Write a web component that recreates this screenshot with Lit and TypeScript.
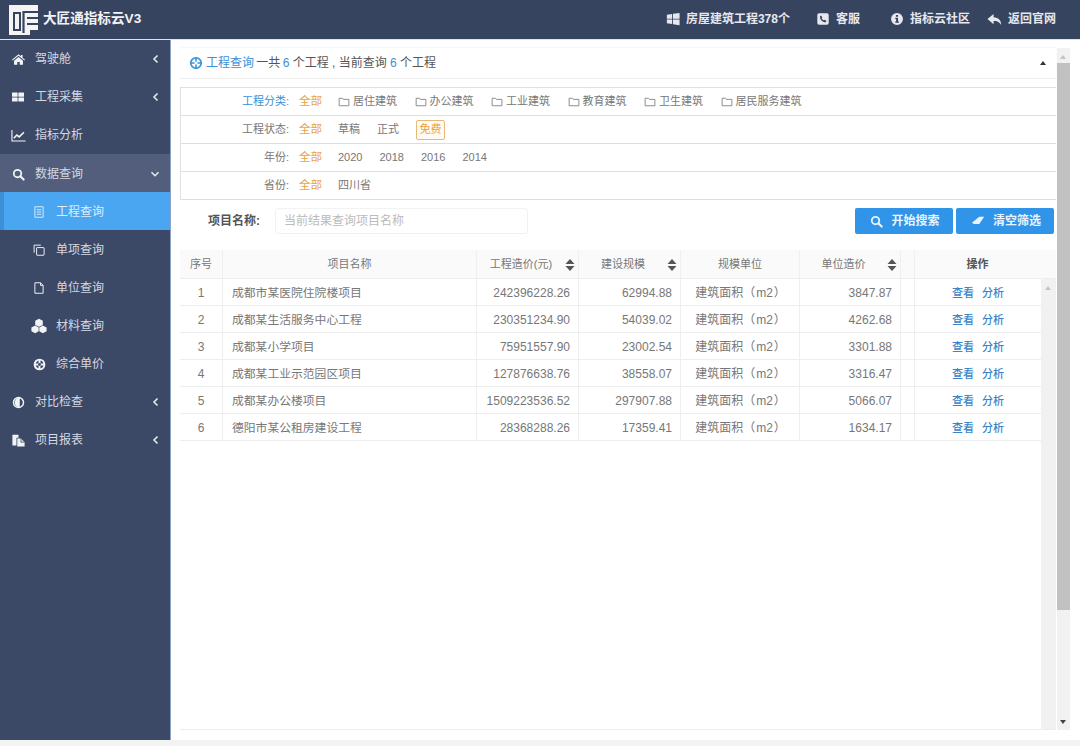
import { LitElement, html, css, svg } from "lit";
import { customElement } from "lit/decorators.js";

const I: Record<string, any> = {
  home: svg`<path d="M8 1.500 0 8.300l.8 1L8 3.300l7.200 6 .8-1-3-2.500V2.500h-2v1.600z"/><path d="M2.500 9.600 8 5l5.500 4.600V14.500H9.500v-3.500h-3v3.500h-4z"/>`,
  th: svg`<rect x="0" y="2" width="7.500" height="5.500" rx=".5"/><rect x="8.500" y="2" width="7.500" height="5.500" rx=".5"/><rect x="0" y="8.500" width="7.500" height="5.500" rx=".5"/><rect x="8.500" y="8.500" width="7.500" height="5.500" rx=".5"/>`,
  chart: svg`<path d="M1 2v11.800h14.500" fill="none" stroke="currentColor" stroke-width="1.200"/><path d="M3 11 6.200 7.500l2.600 2L13.800 4.500" fill="none" stroke="currentColor" stroke-width="1.700"/>`,
  search: svg`<circle cx="6.800" cy="6.800" r="4.600" fill="none" stroke="currentColor" stroke-width="2.200"/><path d="m10.300 10.300 4 4" stroke="currentColor" stroke-width="2.600" stroke-linecap="round"/>`,
  list: svg`<path d="M2.500 1h11v14h-11z M5 5h6 M5 8h6 M5 11h6" fill="none" stroke="currentColor" stroke-width="1.300"/>`,
  copy: svg`<path d="M1.500 11.500V1.500h9" fill="none" stroke="currentColor" stroke-width="1.300"/><rect x="4.800" y="4.800" width="10" height="10.200" rx=".6" fill="none" stroke="currentColor" stroke-width="1.300"/>`,
  file: svg`<path d="M2.500 1h7.500l3.500 3.500V15h-11zM10 1v3.500h3.500" fill="none" stroke="currentColor" stroke-width="1.300"/>`,
  cubes: svg`<path d="M8 .8 11.800 2.700v4.200L8 8.800 4.200 6.900V2.700z"/><path d="M4.200 7.600 7.700 9.400v3.900L4.200 15.200.4 13.300V9.400z"/><path d="M11.800 7.600l3.800 1.800v3.900l-3.800 1.900-3.500-1.900V9.400z"/>`,
  ring: svg`<circle cx="8" cy="8" r="6" fill="none" stroke="currentColor" stroke-width="2.400"/><path d="M8 2v12M2 8h12" stroke="currentColor" stroke-width="2.400"/><circle cx="8" cy="8" r="1.700" fill="#3b4866"/>`,
  adjust: svg`<circle cx="8" cy="8" r="6.200" fill="none" stroke="currentColor" stroke-width="1.800"/><path d="M9.500 1.800A6.200 6.200 0 0 0 9.500 14.200z"/>`,
  files: svg`<path d="M.5 1h7.500v3.500H5.500V14H.5z"/><path d="M6.500 5.500h4.500L15.500 10v5.500h-9z"/><path d="M11 5.500V10h4.500" fill="none" stroke="#3b4866" stroke-width="1"/>`,
  win: svg`<path d="M1 3.200 7 2.300V7.600H1zM8 2.100l7.500-1.100v6.600H8zM1 8.500h6v5.200l-6-.9zM8 8.500h7.500V15L8 13.900z"/>`,
  phone: svg`<path fill-rule="evenodd" d="M3.500 1.500h9a2 2 0 0 1 2 2v9a2 2 0 0 1-2 2h-9a2 2 0 0 1-2-2v-9a2 2 0 0 1 2-2zM5.700 4 4.500 5c0 3.500 2.800 6.500 6.500 6.600l1-1.300-2-1.500-1 .7C8 9 7 8 6.500 7l.7-1z"/>`,
  info: svg`<path fill-rule="evenodd" d="M8 1.200a6.800 6.800 0 1 0 0 13.600A6.800 6.800 0 0 0 8 1.200zM6.800 3.400h2.400v2H6.800zM6 6.500h3.200v4.400h1v1.500H6v-1.500h1V8H6z"/>`,
  reply: svg`<path d="M7 2 .5 7.500 7 13V9.500c3.500 0 6 .6 8 4.300C15.300 8.500 12 5.800 7 5.500z"/>`,
  eraser: svg`<path d="M9.500 3H15l-5.500 8.500H3.500L1 10z"/>`,
  globe: svg`<circle cx="8" cy="8" r="6" fill="none" stroke="currentColor" stroke-width="2"/><path d="M8 2v12M2 8h12" stroke="currentColor" stroke-width="1.800"/><circle cx="8" cy="8" r="1.800" fill="#fff"/>`,
  folder: svg`<path d="M1.500 3h4.500l1.200 1.500h7.300v8.500H1.500z" fill="none" stroke="currentColor" stroke-width="1.100"/>`,
};
const icon = (n: string, s = 14) =>
  html`<svg class="ic" width=${s} height=${s} viewBox="0 0 16 16" fill="currentColor">${I[n]}</svg>`;

const chevL = html`<svg class="chev" width="8" height="10" viewBox="0 0 8 10"><path d="M5.500 1.500 2 5l3.500 3.500" fill="none" stroke="currentColor" stroke-width="1.600"/></svg>`;
const chevD = html`<svg class="chev" width="10" height="8" viewBox="0 0 10 8"><path d="M1.500 2.200 5 5.700l3.500-3.500" fill="none" stroke="currentColor" stroke-width="1.600"/></svg>`;
const sort = html`<svg class="sort" width="10" height="14" viewBox="0 0 10 14"><path d="M5 1 9.500 6H.5zM5 13 .5 8h9z" fill="#555"/></svg>`;

const nav = [
  { i: "home", s: 13, t: "驾驶舱", c: "l" },
  { i: "th", s: 12, t: "工程采集", c: "l" },
  { i: "chart", s: 15, t: "指标分析" },
  { i: "search", s: 13, t: "数据查询", c: "d", open: true, low: true },
  { i: "list", s: 12, t: "工程查询", sub: true, active: true, low: true },
  { i: "copy", s: 12, t: "单项查询", sub: true, low: true },
  { i: "file", s: 12, t: "单位查询", sub: true, low: true },
  { i: "cubes", s: 16, t: "材料查询", sub: true, low: true },
  { i: "ring", s: 13, t: "综合单价", sub: true, low: true },
  { i: "adjust", s: 13, t: "对比检查", c: "l", low: true },
  { i: "files", s: 13, t: "项目报表", c: "l", low: true },
];

const rows = [
  ["1", "成都市某医院住院楼项目", "242396228.26", "62994.88", "3847.87"],
  ["2", "成都某生活服务中心工程", "230351234.90", "54039.02", "4262.68"],
  ["3", "成都某小学项目", "75951557.90", "23002.54", "3301.88"],
  ["4", "成都某工业示范园区项目", "127876638.76", "38558.07", "3316.47"],
  ["5", "成都某办公楼项目", "1509223536.52", "297907.88", "5066.07"],
  ["6", "德阳市某公租房建设工程", "28368288.26", "17359.41", "1634.17"],
];

const cats = ["居住建筑", "办公建筑", "工业建筑", "教育建筑", "卫生建筑", "居民服务建筑"];

@customElement("app-root")
export class AppRoot extends LitElement {
  static styles = css`
    :host {
      display: block;
      width: 1080px;
      height: 746px;
      overflow: hidden;
      background: #fff;
      font: 12px/1.2 "Liberation Sans", "Noto Sans CJK SC", sans-serif;
      color: #666;
    }
    .ic { flex: none; display: block; }
    .top {
      box-sizing: border-box;
      background: #37445f;
      border-bottom: 1px solid #dfe3ea;
      height: 40px;
      display: flex;
      align-items: center;
      color: #fff;
    }
    .logo { margin-left: 9px; flex: none; display: block; }
    .brand { margin-left: 5px; font-size: 13.6px; font-weight: 700; color: #f2f3f6; }
    .tops { margin-left: auto; display: flex; align-items: center; padding-right: 24px; }
    .tl { display: flex; align-items: center; gap: 6px; font-weight: 700; color: #e6e8ee; }
    .m27 { margin-right: 26px; }
    .m30 { margin-right: 30px; }
    .m18 { margin-right: 17px; }
    .body { display: flex; height: 700px; }
    .strip { height: 6px; background: #f3f3f3; }
    .side { flex: none; background: #3b4866; color: #d5d9e2; border-right: 1px solid #8fa3c4; box-sizing: border-box; width: 171px; }
    .ni { height: 38px; box-sizing: border-box; display: flex; align-items: center; padding-left: 10px; padding-right: 10px; }
    .ni.low { padding-top: 2px; }
    .iw { width: 16px; margin-right: 9px; display: flex; justify-content: center; color: #f2f3f6; flex: none; }
    .ni .chev { margin-left: auto; color: #e6e8ee; }
    .ni.open { background: #525e7b; }
    .ni.sub { padding-left: 31px; }
    .ni.active { background: #4ba6f2; color: #dcecfb; box-shadow: inset 4px 0 0 #3d8fd6; }
    .ni.active .iw { color: #d7ecfc; }
    .main { flex: 1; min-width: 0; padding: 8px 10px 0 9px; display: flex; gap: 1px; background: #fff; }
    .col { width: 876px; flex: none; height: 682px; display: flex; flex-direction: column; }
    .title {
      height: 31px;
      box-sizing: border-box;
      border-bottom: 1px solid #eee;
      display: flex;
      align-items: center;
      padding: 0 10px 0 9px;
      color: #555;
      white-space: pre;
      box-shadow: 0 -1px 2px #f4f4f4;
    }
    .title .ic { color: #3a96dd; margin-right: 3px; }
    .blue { color: #3a8fd6; }
    .tight { margin-left: -1px; }
    .tri { margin-left: auto; width: 0; height: 0; border: 3.5px solid transparent; border-bottom: 4px solid #333; border-top: 0; }
    .filter { margin-top: 8px; border: 1px solid #e0e0e0; border-width: 1px 0 0 1px; }
    .fr { height: 28px; box-sizing: border-box; border-bottom: 1px solid #ddd; display: flex; align-items: center; padding-top: 1px; font-size: 11px; }
    .fr label { width: 108px; text-align: right; color: #777; flex: none; }
    .fr label.blue { color: #3a8fd6; }
    .all { color: #e8a33d; margin-left: 10px; width: 39px; flex: none; font-size: 11.5px; }
    .fi { color: #777; margin-right: 17px; display: flex; align-items: center; gap: 3px; white-space: nowrap; }
    .cat { margin-right: 17.5px; }
    .fi .ic { color: #777; }
    .badge { border: 1px solid #e8b878; border-radius: 2px; color: #e8a33d; background: #fffaf2; width: 29px; height: 20px; box-sizing: border-box; display: flex; align-items: center; justify-content: center; margin-top: -1px; }
    .sr { height: 45px; display: flex; align-items: center; padding-left: 28px; padding-bottom: 4px; box-sizing: border-box; }
    .sr b { color: #555; width: 67px; flex: none; padding-top: 1px; }
    .inp { width: 253px; height: 26px; box-sizing: border-box; border: 1px solid #f2f2f2; border-radius: 3px; color: #bbb; padding-left: 8px; line-height: 25px; }
    .btns { margin-left: auto; display: flex; gap: 3px; padding-right: 2px; }
    .btn { width: 98px; height: 26px; box-sizing: border-box; padding: 1px 0 0 2px; background: #3095e8; color: #eaf4fd; border-radius: 2px; display: flex; align-items: center; justify-content: center; gap: 8px; font-weight: 700; }
    .tw { margin-top: 5px; flex: 1; display: flex; flex-direction: column; min-height: 0; border-bottom: 1px solid #eee; }
    .rowg { display: grid; grid-template-columns: 43px 254px 102px 102px 119px 101px 14px 126px; }
    .hd { height: 29px; background: #fafafa; box-sizing: border-box; border-bottom: 1px solid #eee; grid-template-columns: 43px 254px 102px 102px 119px 101px 14px 141px; font-size: 11px; }
    .hd > div { display: flex; align-items: center; justify-content: center; color: #777; border-right: 1px solid #f0f0f0; padding-top: 1px; }
    .hd .lab { flex: 1; text-align: center; }
    .hd .sort { margin-right: 3px; flex: none; }
    .hd > div:last-child { border-right: 0; color: #555; font-weight: 700; padding-right: 16px; }
    .tb { flex: 1; display: flex; min-height: 0; }
    .rows { width: 861px; flex: none; }
    .r { height: 27px; box-sizing: border-box; border-bottom: 1px solid #eee; }
    .r > div { display: flex; align-items: center; border-right: 1px solid #eee; padding: 3px 9px 0; color: #777; white-space: nowrap; }
    .r > .n { font-size: 11.8px; }
    .r > .c { justify-content: center; }
    .r > .u { padding-left: 10px; }
    .r > .e { justify-content: flex-end; padding-right: 8px; padding-left: 0; }
    .r > .x { padding: 0; }
    .r > .o { border-right: 0; justify-content: center; gap: 8px; color: #3a85c8; padding: 4px 0 0; font-size: 11px; font-weight: 500; }
    .m2 { padding: 0 1px; }
    .bar { width: 15px; background: #f1f1f1; position: relative; flex: none; }
    .arrow { position: absolute; left: 4px; width: 0; height: 0; border: 3.5px solid transparent; }
    .up { border-bottom: 4px solid #c4c4c4; border-top: 0; top: 7px; }
    .down { border-top: 4px solid #444; border-bottom: 0; bottom: 6px; }
    .osb { width: 13px; flex: none; height: 682px; background: #f1f1f1; position: relative; }
    .thumb { position: absolute; left: 0; right: 0; top: 15px; height: 547px; background: #c1c1c1; }
    .ol { left: 3px; }
  `;

  render() {
    return html`
      <div class="top">
        <svg class="logo" width="29" height="30" viewBox="0 0 29 30">
          <path d="M0 0h29v25h-8v5H0z" fill="#f4f4f4"/>
          <path d="M5 8h6v17H5z" fill="none" stroke="#37445f" stroke-width="2"/>
          <path d="M14.500 6v22" stroke="#37445f" stroke-width="2.200"/>
          <path d="M14.500 7H29M18 13h11M18 19h11" fill="none" stroke="#37445f" stroke-width="2"/>
        </svg>
        <span class="brand">大匠通指标云V3</span>
        <div class="tops">
          <div class="tl m27">${icon("win", 14)}<span>房屋建筑工程378个</span></div>
          <div class="tl m30">${icon("phone", 14)}<span>客服</span></div>
          <div class="tl m18">${icon("info", 14)}<span>指标云社区</span></div>
          <div class="tl">${icon("reply", 15)}<span>返回官网</span></div>
        </div>
      </div>
      <div class="body">
        <nav class="side">
          ${nav.map(
            (n) => html`<div class="ni ${n.open ? "open" : ""} ${n.sub ? "sub" : ""} ${n.active ? "active" : ""} ${n.low ? "low" : ""}">
              <span class="iw">${icon(n.i, n.s)}</span><span>${n.t}</span>${n.c === "l" ? chevL : n.c === "d" ? chevD : ""}
            </div>`
          )}
        </nav>
        <div class="main">
          <div class="col">
            <div class="title">
              ${icon("globe", 14)}<span class="blue">工程查询</span><span class="tight"> 一共 </span><span class="blue tight">6</span><span> 个工程 , 当前查询 </span><span class="blue">6</span><span> 个工程</span>
              <span class="tri"></span>
            </div>
            <div class="filter">
              <div class="fr">
                <label class="blue">工程分类:</label><span class="all">全部</span>
                ${cats.map((c) => html`<span class="fi cat">${icon("folder", 12)}<span>${c}</span></span>`)}
              </div>
              <div class="fr">
                <label>工程状态:</label><span class="all">全部</span>
                <span class="fi">草稿</span><span class="fi">正式</span><span class="badge">免费</span>
              </div>
              <div class="fr">
                <label>年份:</label><span class="all">全部</span>
                ${["2020", "2018", "2016", "2014"].map((y) => html`<span class="fi">${y}</span>`)}
              </div>
              <div class="fr">
                <label>省份:</label><span class="all">全部</span><span class="fi">四川省</span>
              </div>
            </div>
            <div class="sr">
              <b>项目名称:</b>
              <div class="inp">当前结果查询项目名称</div>
              <div class="btns">
                <div class="btn">${icon("search", 13)}<span>开始搜索</span></div>
                <div class="btn">${icon("eraser", 14)}<span>清空筛选</span></div>
              </div>
            </div>
            <div class="tw">
              <div class="rowg hd">
                <div>序号</div>
                <div>项目名称</div>
                <div><span class="lab">工程造价(元)</span>${sort}</div>
                <div><span class="lab">建设规模</span>${sort}</div>
                <div>规模单位</div>
                <div><span class="lab">单位造价</span>${sort}</div>
                <div></div>
                <div>操作</div>
              </div>
              <div class="tb">
                <div class="rows">
                  ${rows.map(
                    (r) => html`<div class="rowg r">
                      <div class="c">${r[0]}</div>
                      <div class="n">${r[1]}</div>
                      <div class="e">${r[2]}</div>
                      <div class="e">${r[3]}</div>
                      <div class="c u">建筑面积（<span class="m2">m2</span>）</div>
                      <div class="e">${r[4]}</div>
                      <div class="x"></div>
                      <div class="o"><span>查看</span><span>分析</span></div>
                    </div>`
                  )}
                </div>
                <div class="bar"><span class="arrow up"></span></div>
              </div>
            </div>
          </div>
          <div class="osb">
            <span class="arrow up ol"></span>
            <div class="thumb"></div>
            <span class="arrow down ol"></span>
          </div>
        </div>
      </div>
      <div class="strip"></div>
    `;
  }
}
